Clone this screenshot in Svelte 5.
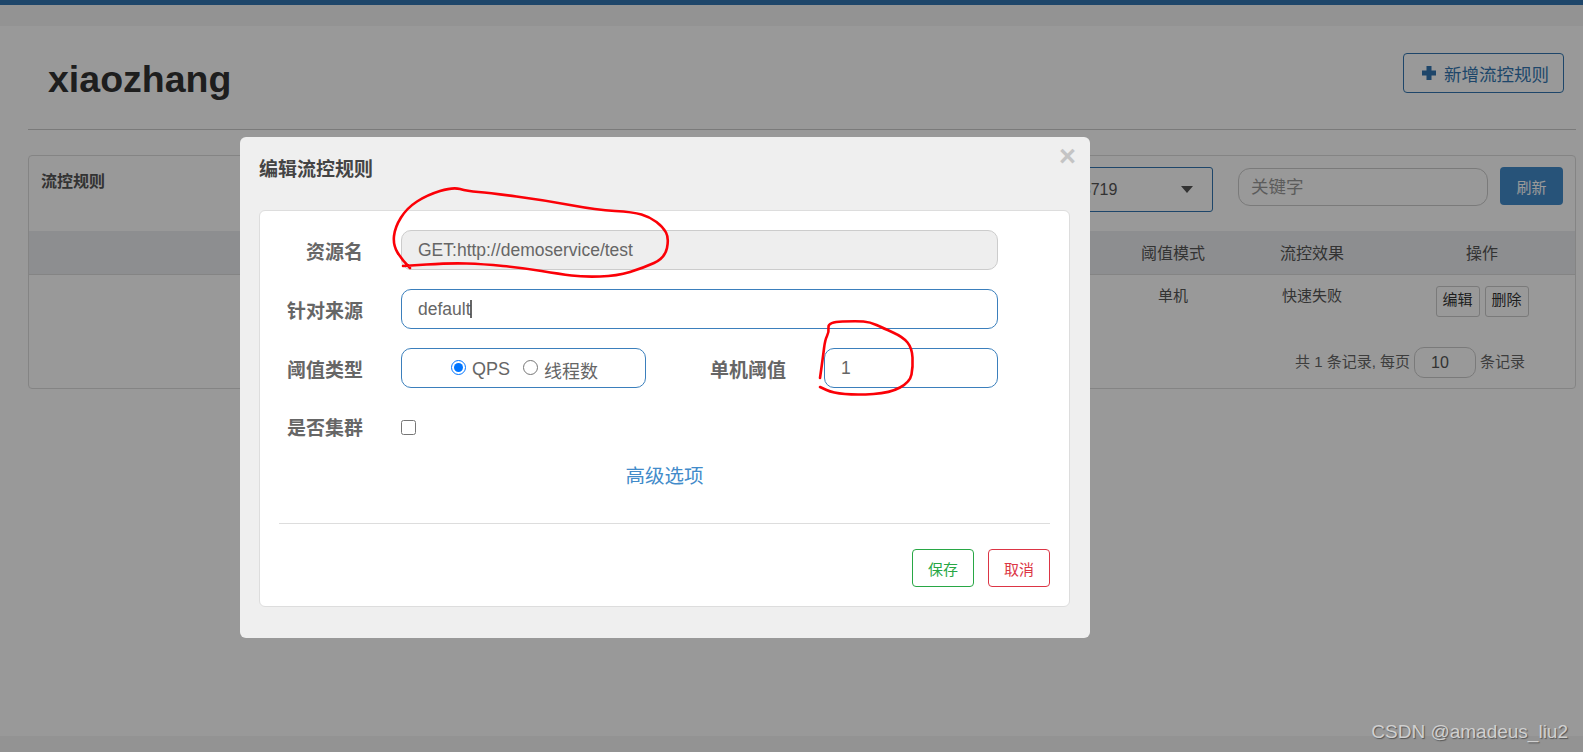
<script>
  const ring = [[410,268],[402,260],[393,245],[395,227],[407,208],[427,195],[453,187],[467,191],[490,193],[543,200],[597,210],[633,212],[650,217],[663,227],[669,238],[665,258],[643,268],[617,276],[583,277],[560,274],[523,268],[483,264],[450,263],[403,266]];
  const hook = [[820,378],[823,357],[825,340],[829,332],[828,322],[857,321],[870,322],[883,328],[903,337],[912,348],[913,367],[910,382],[890,393],[857,395],[833,393],[820,387]];

  // hand-drawn stroke: quadratic curves through the midpoints
  const smooth = (pts) => {
    let d = `M${pts[0][0]} ${pts[0][1]}`;
    for (let i = 1; i < pts.length - 1; i++) {
      const mx = (pts[i][0] + pts[i + 1][0]) / 2;
      const my = (pts[i][1] + pts[i + 1][1]) / 2;
      d += ` Q${pts[i][0]} ${pts[i][1]} ${mx} ${my}`;
    }
    const last = pts[pts.length - 1];
    return d + ` L${last[0]} ${last[1]}`;
  };
</script>

<div class="page">
  <div class="topbar"></div>
  <div class="subbar"></div>

  <div class="content">
    <header class="head">
      <h1>xiaozhang</h1>
      <button class="add-btn">
        <svg width="14" height="14" viewBox="0 0 14 14"><path d="M4.5 0h5v4.5H14v5H9.500V14h-5V9.500H0v-5h4.500z" fill="#3276b1" /></svg>
        新增流控规则
      </button>
    </header>

    <section class="card">
      <div class="card-top">
        <span class="card-title">流控规则</span>
        <div class="select">
          <span>192.168.1.100:8719</span>
          <i class="caret"></i>
        </div>
        <input class="keyword" placeholder="关键字" />
        <button class="refresh">刷新</button>
      </div>

      <div class="grid grid-head">
        <div></div>
        <div>阈值模式</div>
        <div>流控效果</div>
        <div>操作</div>
      </div>
      <div class="grid grid-row">
        <div></div>
        <div>单机</div>
        <div>快速失败</div>
        <div class="ops">
          <button>编辑</button>
          <button>删除</button>
        </div>
      </div>

      <div class="pager">
        <span>共 1 条记录, 每页</span>
        <input value="10" />
        <span>条记录</span>
      </div>
    </section>
  </div>

  <div class="footer"></div>

  <div class="backdrop">
    <div class="modal">
      <span class="close">×</span>
      <h3>编辑流控规则</h3>
      <div class="form">
        <div class="row">
          <label>资源名</label>
          <input class="field wide disabled" value="GET:http://demoservice/test" disabled />
        </div>
        <div class="row">
          <label>针对来源</label>
          <input class="field wide" value="default" />
        </div>
        <div class="row">
          <label>阈值类型</label>
          <div class="field radios">
            <label class="opt"><input type="radio" name="grade" checked />QPS</label>
            <label class="opt"><input type="radio" name="grade" />线程数</label>
          </div>
          <label class="second">单机阈值</label>
          <input class="field small" value="1" />
        </div>
        <div class="row check">
          <label>是否集群</label>
          <input type="checkbox" />
        </div>
        <div class="advanced"><a href="#top">高级选项</a></div>
        <div class="foot">
          <button class="save">保存</button>
          <button class="cancel">取消</button>
        </div>
      </div>
    </div>
  </div>

  <svg class="ink" width="1583" height="752" viewBox="0 0 1583 752">
    <path d="M471 300V318" stroke="#333" stroke-width="1.5" fill="none" />
    <path d={smooth(ring)} />
    <path d={smooth(hook)} />
  </svg>

  <div class="mark">CSDN @amadeus_liu2</div>
</div>

<style>
  :global(body) {
    margin: 0;
    background: #fff;
    font-family: "Liberation Sans", "Noto Sans CJK SC", sans-serif;
    overflow: hidden;
  }

  .page {
    position: relative;
    display: flex;
    flex-direction: column;
    height: 752px;
    overflow: hidden;
    color: #333;
  }

  .topbar {
    height: 5px;
    background: #3276b1;
  }

  .subbar {
    height: 21px;
    background: #f6f6f6;
  }

  .content {
    padding: 0 7px 0 28px;
  }

  .footer {
    height: 16px;
    margin-top: auto;
    background: #f6f6f6;
  }

  .head {
    display: flex;
    justify-content: space-between;
    align-items: flex-start;
    height: 104px;
    border-bottom: 1px solid #ccc;
    box-sizing: border-box;
    padding-top: 27px;
  }

  h1 {
    margin: 5px 0 0 20px;
    font-size: 37.5px;
    line-height: 42px;
    color: #333;
  }

  .add-btn {
    display: flex;
    align-items: center;
    gap: 8px;
    width: 161px;
    height: 40px;
    margin-right: 12px;
    padding: 0 0 0 18px;
    border: 1px solid #3276b1;
    border-radius: 4px;
    background: #fff;
    color: #3276b1;
    font: inherit;
    font-size: 17.5px;
  }

  .card {
    height: 234px;
    margin-top: 25px;
    box-sizing: border-box;
    border: 1px solid #ddd;
    border-radius: 4px;
  }

  .card-top {
    display: flex;
    align-items: flex-start;
    box-sizing: border-box;
    height: 75px;
    padding: 11px 12px 0 12px;
  }

  .card-title {
    margin-top: 1px;
    font-size: 16px;
    font-weight: bold;
    color: #555;
  }

  .select {
    display: flex;
    align-items: center;
    justify-content: space-between;
    box-sizing: border-box;
    width: 249px;
    height: 45px;
    margin-left: auto;
    padding: 0 19px 0 10px;
    border: 1px solid #3276b1;
    border-radius: 3px;
    font-size: 16px;
    color: #555;
  }

  .caret {
    width: 0;
    height: 0;
    border-left: 6.5px solid transparent;
    border-right: 6.5px solid transparent;
    border-top: 7px solid #555;
  }

  .keyword {
    box-sizing: border-box;
    width: 250px;
    height: 38px;
    margin: 1px 12px 0 25px;
    padding: 0 12px;
    border: 1px solid #ccc;
    border-radius: 12px;
    font: inherit;
    font-size: 17.5px;
  }

  .keyword::placeholder {
    color: #999;
  }

  .refresh {
    width: 63px;
    height: 38px;
    border: 0;
    border-radius: 4px;
    background: #428bca;
    color: #fff;
    font: inherit;
    font-size: 15px;
  }

  .grid {
    display: grid;
    grid-template-columns: 1fr 124px 154px 186px;
    text-align: center;
  }

  .grid-head {
    height: 44px;
    align-items: center;
    box-sizing: border-box;
    padding-bottom: 2px;
    background: #ecedf0;
    border-bottom: 1px solid #ddd;
    font-size: 16px;
    color: #555;
  }

  .grid-row {
    height: 72px;
    padding-top: 11px;
    box-sizing: border-box;
    font-size: 15px;
    line-height: 20px;
    color: #555;
  }

  .ops {
    display: flex;
    justify-content: center;
    gap: 5px;
  }

  .ops button {
    width: 44px;
    height: 31px;
    padding: 0 0 3px 0;
    border: 1px solid #ccc;
    border-radius: 3px;
    background: #fff;
    color: #333;
    font: inherit;
    font-size: 15px;
  }

  .pager {
    display: flex;
    justify-content: flex-end;
    align-items: center;
    gap: 4px;
    padding-right: 50px;
    font-size: 15px;
    color: #666;
  }

  .pager span {
    margin-bottom: 4px;
  }

  .pager input {
    box-sizing: border-box;
    width: 62px;
    height: 31px;
    padding: 0 16px;
    border: 1px solid #ccc;
    border-radius: 10px;
    font: inherit;
    font-size: 16px;
    color: #555;
  }

  .backdrop {
    position: absolute;
    inset: 0;
    padding: 137px 0 0 240px;
    background: rgba(0, 0, 0, 0.4);
  }

  .modal {
    position: relative;
    box-sizing: border-box;
    width: 850px;
    height: 501px;
    padding: 0 20px 0 19px;
    background: #efefef;
    border-radius: 6px;
  }

  .close {
    position: absolute;
    top: 4px;
    right: 14px;
    font-size: 29px;
    line-height: 30px;
    font-weight: bold;
    color: #c4c4c4;
  }

  h3 {
    margin: 0;
    padding-top: 21px;
    height: 52px;
    font-size: 19px;
    line-height: 24px;
    color: #444;
  }

  .form {
    box-sizing: border-box;
    height: 397px;
    padding: 19px 19px 0 19px;
    background: #fff;
    border: 1px solid #ddd;
    border-radius: 6px;
  }

  .row {
    display: flex;
    align-items: center;
    height: 40px;
    margin-bottom: 19px;
  }

  .row > label {
    width: 84px;
    margin-right: 38px;
    text-align: right;
    font-size: 19px;
    font-weight: bold;
    color: #666;
  }

  .row > label.second {
    width: 85px;
    margin: 0 38px 0 55px;
  }

  .field {
    box-sizing: border-box;
    height: 40px;
    padding: 0 16px;
    border: 1px solid #3b7fbc;
    border-radius: 10px;
    font: inherit;
    font-size: 17.5px;
    color: #666;
    background: #fff;
  }

  .wide {
    width: 597px;
  }

  .small {
    width: 174px;
  }

  .disabled {
    background: #eee;
    border-color: #ccc;
    opacity: 1;
  }

  .radios {
    display: flex;
    justify-content: center;
    align-items: center;
    gap: 13px;
    width: 245px;
    padding: 3px 0 0 2px;
    font-size: 18px;
  }

  .opt {
    display: flex;
    align-items: center;
    gap: 6px;
  }

  .opt input {
    width: 15px;
    height: 15px;
    margin: 0 0 5px 0;
  }

  .check {
    height: 20px;
    margin-top: 28px;
    margin-bottom: 0;
  }

  .check input {
    width: 15px;
    height: 15px;
    margin: 2px 0 0 0;
  }

  .advanced {
    margin-top: 25px;
    box-sizing: border-box;
    height: 63px;
    text-align: center;
    font-size: 19.5px;
    line-height: 30px;
    border-bottom: 1px solid #ddd;
  }

  .advanced a {
    color: #428bca;
    text-decoration: none;
  }

  .foot {
    display: flex;
    justify-content: flex-end;
    gap: 14px;
    margin-top: 25px;
  }

  .foot button {
    width: 62px;
    height: 38px;
    padding: 0;
    background: #fff;
    border: 1px solid;
    border-radius: 4px;
    font: inherit;
    font-size: 15px;
  }

  .save {
    color: #28a745;
    border-color: #28a745;
  }

  .cancel {
    color: #dc3545;
    border-color: #dc3545;
  }

  .ink {
    position: absolute;
    inset: 0;
    pointer-events: none;
  }

  .ink path:not(:first-child) {
    fill: none;
    stroke: #fb0007;
    stroke-width: 2.6;
    stroke-linecap: round;
    stroke-linejoin: round;
  }

  .mark {
    position: absolute;
    right: 15px;
    bottom: 9px;
    font-size: 19px;
    color: #d0d0d0;
    text-shadow: 1px 1px 1px #555;
  }
</style>
